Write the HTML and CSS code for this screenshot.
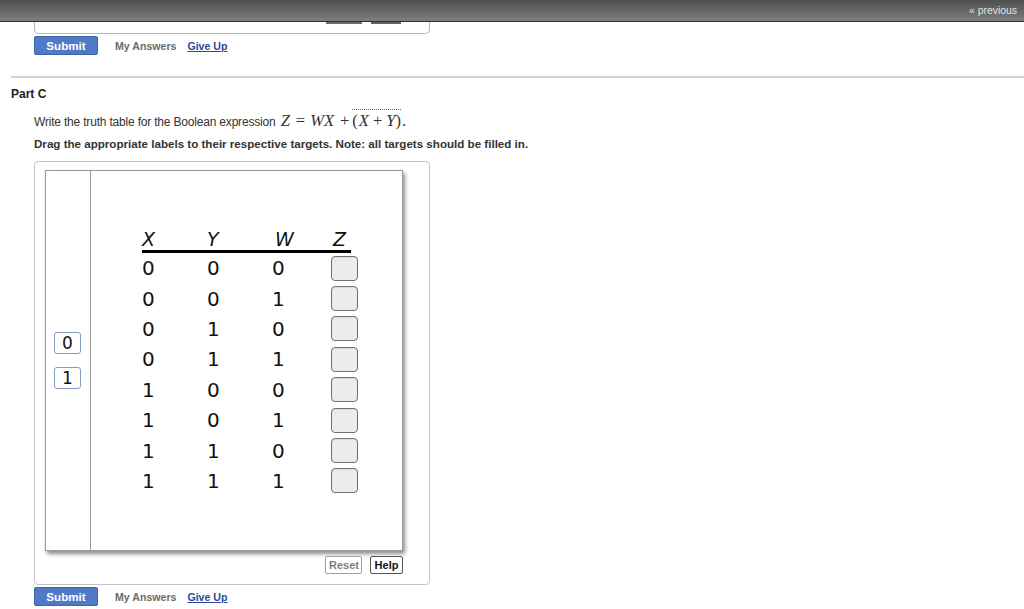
FILE: index.html
```html
<!DOCTYPE html>
<html>
<head>
<meta charset="utf-8">
<link rel="stylesheet" href="styles.css">
</head>
<body>
<div class="topbar"><a class="prev">« previous</a></div>
<div class="prev-tail">
  <span class="stub stub-a"></span>
  <span class="stub stub-b"></span>
</div>
<div class="actions actions-top">
  <button class="submit">Submit</button>
  <span class="my-answers">My Answers</span>
  <a class="give-up">Give Up</a>
</div>
<div class="rule"></div>
<div class="part-title">Part C</div>
<div class="question">
  <p class="prompt">Write the truth table for the Boolean expression <span class="math"><i>Z</i><span class="op eq">=</span><i>W</i><i>X</i><span class="op plus1">+</span><span class="over">(<i class="x2">X</i><span class="op plus2">+</span><i>Y</i>)</span>.</span></p>
  <p class="instr">Drag the appropriate labels to their respective targets. Note: all targets should be filled in.</p>
  <div class="dnd">
    <div class="panel">
      <div class="bank">
        <div class="label">0</div>
        <div class="label">1</div>
      </div>
      <div class="table-area">
        <div class="thead">
          <span>X</span><span class="hy">Y</span><span class="hw">W</span><span class="hz">Z</span>
        </div>
        <div class="row"><span>0</span><span>0</span><span>0</span><span class="target"></span></div>
        <div class="row"><span>0</span><span>0</span><span>1</span><span class="target"></span></div>
        <div class="row"><span>0</span><span>1</span><span>0</span><span class="target"></span></div>
        <div class="row"><span>0</span><span>1</span><span>1</span><span class="target"></span></div>
        <div class="row"><span>1</span><span>0</span><span>0</span><span class="target"></span></div>
        <div class="row"><span>1</span><span>0</span><span>1</span><span class="target"></span></div>
        <div class="row"><span>1</span><span>1</span><span>0</span><span class="target"></span></div>
        <div class="row"><span>1</span><span>1</span><span>1</span><span class="target"></span></div>
      </div>
    </div>
    <div class="tools">
      <button class="tool reset">Reset</button>
      <button class="tool help">Help</button>
    </div>
  </div>
</div>
<div class="actions actions-bottom">
  <button class="submit">Submit</button>
  <span class="my-answers">My Answers</span>
  <a class="give-up">Give Up</a>
</div>
</body>
</html>
```

FILE: styles.css
```css
* { box-sizing: border-box; }
html, body { margin: 0; padding: 0; background: #fff; }
body {
  font-family: "Liberation Sans", Arial, sans-serif;
  color: #333;
  width: 1024px;
  height: 609px;
  overflow: hidden;
}

.topbar {
  height: 22px;
  background: linear-gradient(#4f4f4f, #7d7d7d);
  border-bottom: 1px solid #2f2f2f;
  display: flex;
  justify-content: flex-end;
  align-items: center;
  padding-right: 7px;
}
.prev {
  color: #e2e2e2;
  font-size: 10.4px;
  line-height: 12px;
}

.prev-tail {
  margin-left: 34px;
  width: 396px;
  height: 12px;
  border: 1px solid #b4b4b4;
  border-top: none;
  border-radius: 0 0 5px 5px;
  display: flex;
  justify-content: flex-end;
  gap: 9px;
  padding-right: 28px;
}
.stub { display: block; height: 2px; }
.stub-a { width: 36px; background: #6b6b6b; }
.stub-b { width: 30px; background: #5b6767; }

.actions {
  display: flex;
  align-items: center;
  margin-left: 34px;
  height: 19px;
}
.actions-top { margin-top: 2px; }
.actions-bottom { margin-top: 2px; }
.submit {
  width: 64px;
  height: 19px;
  padding: 0;
  border: 1px solid #3b63a8;
  border-radius: 2px;
  background: #5079c6;
  color: #fff;
  font-family: "Liberation Sans", Arial, sans-serif;
  font-weight: bold;
  font-size: 11.6px;
  line-height: 17px;
}
.my-answers {
  margin-left: 17px;
  font-size: 10.6px;
  font-weight: bold;
  color: #6b6b6b;
}
.give-up {
  margin-left: 11px;
  font-size: 10.6px;
  font-weight: bold;
  color: #2a4a9e;
  text-decoration: underline;
}

.rule {
  margin: 21px 0 0 11px;
  height: 2px;
  background: #d3d3d3;
}
.part-title {
  margin: 9px 0 0 11px;
  font-size: 12px;
  line-height: 14px;
  font-weight: bold;
  color: #222;
}

.question { margin-left: 34px; }
.prompt {
  margin: 12px 0 0 0;
  font-size: 12px;
  letter-spacing: -0.19px;
  line-height: 16px;
  color: #333;
}
.math {
  font-family: "Liberation Serif", "DejaVu Serif", serif;
  font-size: 16.5px;
  letter-spacing: 0;
  color: #333;
  margin-left: 2px;
}
.math i { font-style: italic; }
.math .op { display: inline-block; }
.math .eq { margin: 0 5px 0 6px; }
.math .plus1 { margin: 0 3px 0 6px; }
.math .plus2 { margin: 0 4px 0 4px; }
.math .x2 { margin-left: 1px; }
.over {
  border-top: 1px dotted #666;
  padding-top: 1px;
  margin-right: 1px;
}
.instr {
  margin: 7px 0 0 0;
  font-size: 11.6px;
  line-height: 14px;
  font-weight: bold;
  color: #333;
}

.dnd {
  margin-top: 10px;
  width: 396px;
  height: 424px;
  border: 1px solid #c4c4c4;
  border-radius: 4px;
  padding: 8px 0 0 10px;
}
.panel {
  width: 358px;
  height: 381px;
  border: 1px solid #9a9a9a;
  background: #fff;
  box-shadow: 2px 3px 4px rgba(0, 0, 0, 0.45);
  display: flex;
}
.bank {
  width: 45px;
  border-right: 1px solid #9a9a9a;
  display: flex;
  flex-direction: column;
  align-items: center;
  justify-content: center;
  gap: 13px;
  padding-right: 1px;
}
.label {
  width: 27px;
  height: 22px;
  border: 1px solid #8798c4;
  border-radius: 3px;
  background: #fff;
  font-family: "DejaVu Sans", Verdana, sans-serif;
  font-size: 17px;
  line-height: 20px;
  text-align: center;
  color: #111;
}

.table-area {
  padding: 58px 0 0 51px;
  font-family: "DejaVu Sans", Verdana, sans-serif;
  color: #111;
}
.thead {
  width: 209px;
  height: 24px;
  border-bottom: 3px solid #000;
  display: grid;
  grid-template-columns: 65px 65px 59px 20px;
  font-style: italic;
  font-size: 19px;
  line-height: 21px;
}
.thead .hw { padding-left: 3px; }
.thead .hz { padding-left: 2px; }
.row {
  height: 30.4px;
  display: grid;
  grid-template-columns: 65px 65px 59px 27px;
  align-items: center;
  font-size: 20px;
}
.target {
  width: 27px;
  height: 25px;
  border: 1px solid #707070;
  border-radius: 4px;
  background: #ececec;
  box-shadow: inset 0 1px 1px rgba(0,0,0,0.08);
}

.tools {
  display: flex;
  justify-content: flex-end;
  gap: 8px;
  width: 358px;
  margin-top: 5px;
}
.tool {
  height: 18px;
  padding: 0 3px;
  background: #fff;
  border-radius: 2px;
  font-family: "Liberation Sans", Arial, sans-serif;
  font-weight: bold;
  font-size: 11px;
  line-height: 16px;
}
.reset { border: 1px solid #a0a0a0; color: #808080; width: 37px; }
.help { border: 1px solid #555; color: #111; width: 33px; }
```
